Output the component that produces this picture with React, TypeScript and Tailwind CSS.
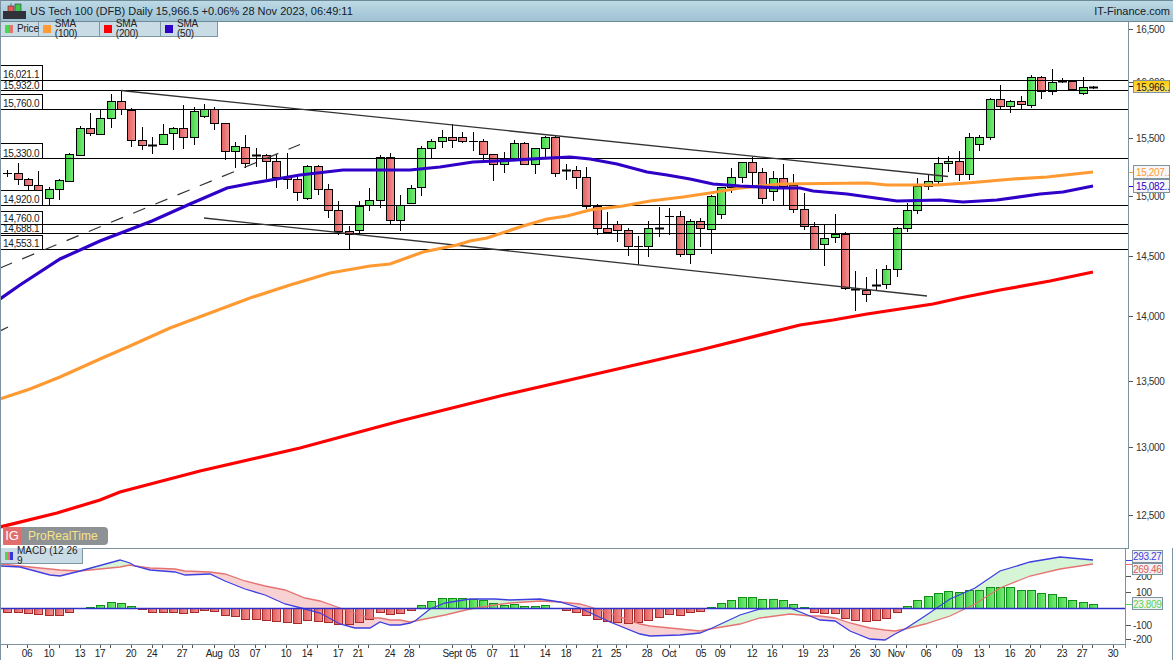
const RED = '#e57373'

// top, bottom, high, low, kind (g green, r red, d thick doji, t thin doji)
type Candle = [number, number, number, number, string]

const candles: Candle[] = [
  [172, 172, 169, 176, 't'], [172, 178, 162, 184, 'r'], [178, 184, 177, 190, 'r'], [184, 190, 170, 190, 'r'],
  [188, 197, 186, 204, 'g'], [179, 188, 178, 199, 'g'], [153, 180, 152, 181, 'g'], [127, 154, 125, 155, 'g'],
  [127, 132, 112, 135, 'r'], [117, 133, 109, 133, 'g'], [100, 117, 93, 127, 'g'], [100, 108, 89, 114, 'r'],
  [109, 139, 107, 146, 'r'], [139, 144, 126, 149, 'r'], [144, 144, 136, 153, 'd'], [133, 143, 123, 144, 'g'],
  [127, 132, 126, 149, 'g'], [127, 136, 104, 148, 'r'], [110, 136, 106, 144, 'g'], [108, 115, 103, 117, 'g'],
  [108, 122, 106, 129, 'r'], [122, 150, 122, 159, 'r'], [145, 150, 141, 167, 'g'], [146, 162, 134, 167, 'r'],
  [154, 154, 147, 166, 'd'], [154, 160, 153, 178, 'r'], [160, 176, 153, 187, 'r'], [176, 178, 152, 188, 'r'],
  [178, 191, 174, 200, 'r'], [165, 197, 164, 199, 'g'], [165, 188, 164, 194, 'r'], [188, 209, 183, 217, 'r'],
  [209, 230, 200, 234, 'r'], [230, 233, 225, 248, 'r'], [205, 229, 200, 234, 'g'], [199, 204, 187, 210, 'g'],
  [156, 199, 154, 207, 'g'], [156, 219, 152, 223, 'r'], [204, 219, 194, 230, 'g'], [187, 202, 184, 202, 'g'],
  [147, 186, 145, 195, 'g'], [140, 147, 138, 157, 'g'], [136, 140, 129, 147, 'g'], [136, 139, 123, 147, 'r'],
  [136, 140, 131, 142, 'r'], [140, 140, 131, 150, 't'], [140, 153, 138, 162, 'r'], [153, 163, 153, 180, 'r'],
  [158, 163, 151, 172, 'g'], [142, 158, 139, 159, 'g'], [142, 163, 141, 164, 'r'], [147, 163, 147, 173, 'g'],
  [136, 147, 135, 157, 'g'], [136, 172, 134, 176, 'r'], [169, 169, 163, 179, 'd'], [169, 176, 165, 188, 'r'],
  [176, 205, 166, 208, 'r'], [205, 227, 203, 234, 'r'], [227, 231, 211, 232, 'r'], [223, 229, 220, 241, 'r'],
  [229, 245, 227, 255, 'r'], [245, 245, 235, 264, 't'], [227, 245, 220, 256, 'g'], [227, 227, 206, 236, 'd'],
  [215, 215, 207, 234, 't'], [215, 253, 210, 256, 'r'], [220, 253, 218, 263, 'g'], [220, 227, 217, 246, 'r'],
  [195, 228, 194, 253, 'g'], [186, 213, 186, 218, 'g'], [176, 186, 167, 192, 'g'], [161, 176, 161, 182, 'g'],
  [161, 171, 156, 186, 'r'], [171, 197, 167, 203, 'r'], [177, 190, 170, 200, 'g'], [177, 185, 163, 204, 'r'],
  [184, 208, 173, 212, 'r'], [208, 225, 192, 229, 'r'], [225, 248, 221, 249, 'r'], [237, 243, 224, 265, 'g'],
  [233, 236, 213, 242, 'g'], [233, 287, 231, 289, 'r'], [288, 288, 270, 310, 'd'], [289, 293, 276, 301, 'r'],
  [284, 284, 268, 289, 'd'], [268, 283, 264, 288, 'g'], [227, 268, 226, 276, 'g'], [209, 227, 202, 231, 'g'],
  [185, 209, 177, 213, 'g'], [180, 185, 174, 189, 'g'], [162, 180, 156, 184, 'g'], [160, 162, 155, 171, 'g'],
  [160, 173, 150, 180, 'r'], [136, 173, 132, 179, 'g'], [136, 143, 134, 150, 'g'], [98, 136, 97, 139, 'g'],
  [98, 105, 84, 108, 'r'], [100, 105, 99, 112, 'g'], [100, 103, 95, 108, 'r'], [76, 104, 74, 107, 'g'],
  [76, 90, 75, 98, 'r'], [81, 90, 68, 94, 'g'], [80, 80, 77, 82, 'd'], [80, 88, 79, 89, 'r'],
  [86, 92, 76, 94, 'g'], [86, 86, 85, 88, 'd'],
]

const histogram = [
  -4, -4, -5, -6, -7, -7, -4, 0, 1, 3, 6, 5, 2, -1, -4, -4, -4, -5, -4, -2, -3, -7, -8, -11, -11, -12, -13, -14, -15, -12,
  -13, -14, -16, -16, -14, -11, -4, -6, -5, -2, 3, 7, 10, 10, 10, 9, 8, 5, 3, 4, 2, 2, 3, 0, -2, -4, -7, -11, -13, -14,
  -15, -14, -12, -9, -6, -7, -4, -3, 1, 5, 8, 11, 11, 9, 9, 8, 4, 1, -4, -5, -5, -10, -12, -13, -12, -10, -4, 2, 8, 12,
  15, 17, 16, 18, 18, 21, 21, 21, 18, 18, 15, 14, 11, 8, 6, 4,
]

const candleX = (i: number) => Math.round(7.4 + i * 10.34)

const levels = [
  { y: 79, label: '16,021.1', box: 64, h: 15 },
  { y: 89, label: '15,932.0', box: 79, h: 10 },
  { y: 108, label: '15,760.0', box: 93, h: 15 },
  { y: 157, label: '15,330.0', box: 142, h: 15 },
  { y: 204, label: '14,920.0', box: 189, h: 15 },
  { y: 223, label: '14,760.0', box: 210, h: 13 },
  { y: 232, label: '14,688.1', box: 223, h: 9 },
  { y: 248, label: '14,553.1', box: 234, h: 14 },
]

const priceTicks = [
  ['16,500', 28], ['16,000', 81], ['15,500', 137], ['15,000', 195], ['14,500', 255],
  ['14,000', 315], ['13,500', 380], ['13,000', 446], ['12,500', 514],
] as const

const sma50 = '0,298 20,284 60,258 100,240 152,220 190,203 227,187 253,182 300,174 343,169 390,169 410,169 440,166 473,161 507,159.5 540,157.5 570,156 590,158 617,163 647,171 667,174 690,178 713,183 740,185 780,187 800,187 813,190 847,193 897,200 940,199 963,201 997,199 1040,193 1063,191 1093,185'
const sma100 = '0,398 30,388 60,376 100,358 130,345 170,327 210,312 250,297 290,284 330,272 370,265 390,263 423,251 457,244 470,240 487,237 523,225 547,218 567,215 590,209 623,205 650,200 683,196 710,192 740,187 780,183 867,182 887,184 937,184 967,182 1013,178 1047,176 1093,171'
const sma200 = '0,526 57,512 100,499 120,491 200,470 300,447 400,420 500,395 600,372 700,349 800,324 833,319 867,313 900,308 933,303 960,297 1000,289 1050,280 1093,271'

// x, macd, signal (screen y)
const macd: [number, number, number][] = [
  [1, 565, 563], [20, 566, 565], [50, 574, 568], [60, 575, 569], [80, 570, 570], [120, 559, 566], [130, 562, 564],
  [135, 565, 565], [150, 569, 567], [175, 571, 568], [185, 574, 570], [210, 573, 571], [225, 580, 573], [245, 588, 580],
  [265, 594, 585], [285, 603, 589], [305, 608, 597], [320, 612, 600], [340, 623, 607], [355, 627, 612], [370, 627, 617],
  [380, 621, 617], [390, 624, 619], [400, 624, 619], [410, 622, 621], [415, 620, 620], [430, 608, 617], [445, 602, 614],
  [470, 598, 608], [495, 598, 604], [510, 599, 602], [540, 598, 600], [560, 601, 601], [580, 607, 603], [610, 621, 612],
  [640, 633, 623], [650, 635, 625], [680, 634, 628], [700, 632, 630], [710, 628, 628], [740, 614, 623], [760, 608, 617],
  [790, 607, 613], [810, 615, 615], [820, 619, 615], [835, 620, 617], [850, 630, 622], [870, 638, 627], [885, 639, 629],
  [895, 633, 630], [905, 628, 628], [925, 615, 623], [950, 598, 615], [975, 587, 603], [1000, 570, 587], [1030, 561, 575],
  [1060, 556, 568], [1093, 559, 563],
]

const dates: [string, number][] = [
  ['06', 27], ['10', 49], ['13', 80], ['17', 100], ['20', 131], ['24', 152], ['27', 182], ['Aug', 214], ['03', 234],
  ['07', 255], ['10', 286], ['14', 307], ['17', 338], ['21', 358], ['24', 390], ['28', 409], ['Sept', 452], ['05', 471],
  ['07', 492], ['11', 514], ['14', 545], ['18', 566], ['21', 597], ['25', 616], ['28', 647], ['Oct', 669], ['05', 701],
  ['09', 720], ['12', 752], ['16', 772], ['19', 803], ['23', 823], ['26', 855], ['30', 875], ['Nov', 896], ['06', 926],
  ['09', 957], ['13', 979], ['16', 1010], ['20', 1030], ['23', 1062], ['27', 1082], ['30', 1113],
]

function Gradients() {
  return (
    <defs>
      <linearGradient id="upFill" x1="0" x2="1" y1="0" y2="0">
        <stop offset="0" stopColor="#3fd643" />
        <stop offset="1" stopColor="#7dea7d" />
      </linearGradient>
      <linearGradient id="downFill" x1="0" x2="1" y1="0" y2="0">
        <stop offset="0" stopColor="#e25f5f" />
        <stop offset="1" stopColor="#f39393" />
      </linearGradient>
      <linearGradient id="lastFill" x1="0" x2="0" y1="0" y2="1">
        <stop offset="0" stopColor="#ffc800" />
        <stop offset="1" stopColor="#ffe27a" />
      </linearGradient>
    </defs>
  )
}

function PriceChart() {
  return (
    <svg viewBox="0 21 1173 526" className="block h-[526px] w-[1173px]">
      <Gradients />
      {candles.map(([top, bottom, hi, lo, kind], i) => {
        const x = candleX(i)
        return (
          <g key={i}>
            <line x1={x + 0.5} x2={x + 0.5} y1={hi} y2={lo} stroke="#000" />
            {kind === 'g' || kind === 'r' ? (
              <rect
                x={x - 3.5}
                y={top + 0.5}
                width={8}
                height={bottom - top}
                fill={kind === 'g' ? 'url(#upFill)' : 'url(#downFill)'}
                stroke="#000"
              />
            ) : (
              <line
                x1={x - 4}
                x2={x + 5}
                y1={top + 0.5}
                y2={top + 0.5}
                stroke="#000"
                strokeWidth={kind === 'd' ? 2 : 1}
              />
            )}
          </g>
        )
      })}

      {levels.map(l => (
        <line key={l.y} x1={1} x2={1128} y1={l.y + 0.5} y2={l.y + 0.5} stroke="#000" />
      ))}

      <line x1={121} y1={89.5} x2={948} y2={175.5} stroke="#333" strokeWidth={1.3} />
      <line x1={204} y1={217} x2={927} y2={295} stroke="#333" strokeWidth={1.3} />
      <line x1={0} y1={267} x2={300} y2={143.5} stroke="#333" strokeWidth={1.2} strokeDasharray="13 11" />
      <line x1={0} y1={330} x2={8} y2={326} stroke="#333" strokeWidth={1.2} />

      <polyline points={sma200} fill="none" stroke="#ff0000" strokeWidth={3.2} />
      <polyline points={sma100} fill="none" stroke="#ff9a33" strokeWidth={3.2} />
      <polyline points={sma50} fill="none" stroke="#2f00c8" strokeWidth={3.2} />

      {levels.map(l => (
        <g key={l.label}>
          <rect x={0.5} y={l.box + 0.5} width={42} height={l.h} fill="#fff" stroke="#000" />
        </g>
      ))}
      {levels.map(l => (
        <line key={l.y} x1={0} x2={43} y1={l.y + 0.5} y2={l.y + 0.5} stroke="#000" />
      ))}
      {[
        ['16,021.1', 77], ['15,932.0', 87.5], ['15,760.0', 106], ['15,330.0', 155.5], ['14,920.0', 202],
        ['14,760.0', 220.5], ['14,688.1', 230.5], ['14,553.1', 245.5],
      ].map(([label, y]) => (
        <text key={label} x={3} y={y} fontSize={10} letterSpacing={-0.35} fill="#1a1a1a">
          {label}
        </text>
      ))}

      <line x1={1128.5} x2={1128.5} y1={21} y2={547} stroke="#7d939f" />
      {priceTicks.map(([label, y]) => (
        <g key={label}>
          <line x1={1129} x2={1133} y1={y + 0.5} y2={y + 0.5} stroke="#555" />
          <text x={1136} y={y + 4} fontSize={10} letterSpacing={-0.35} fill="#333">
            {label}
          </text>
        </g>
      ))}

      <line x1={1129} x2={1133} y1={85.5} y2={85.5} stroke="#000" />
      <rect x={1133.5} y={79.5} width={36} height={12} fill="url(#lastFill)" stroke="#7d939f" />
      <text x={1136} y={89.5} fontSize={10} letterSpacing={-0.35} fill="#1a1a1a">15,966..</text>

      <line x1={1129} x2={1133} y1={171.5} y2={171.5} stroke="#ff9a33" />
      <rect x={1133.5} y={164.5} width={36} height={13} fill="#f7f7f7" stroke="#7d939f" />
      <text x={1136} y={175} fontSize={10} letterSpacing={-0.35} fill="#ff9a33">15,207..</text>

      <line x1={1129} x2={1133} y1={185.5} y2={185.5} stroke="#2f00c8" />
      <rect x={1133.5} y={178.5} width={36} height={13} fill="#f7f7f7" stroke="#7d939f" />
      <text x={1136} y={189} fontSize={10} letterSpacing={-0.35} fill="#2f00c8">15,082..</text>
    </svg>
  )
}

function MacdChart() {
  const path = (idx: 1 | 2) => macd.map(p => `${p[0]},${p[idx]}`).join(' ')
  const ticks: number[] = [7]
  dates.forEach(([, x], i) => {
    ticks.push(x)
    const next = dates[i + 1]
    if (next && next[1] - x >= 30) ticks.push(x + 10)
  })

  return (
    <svg viewBox="0 547 1173 113" className="block h-[113px] w-[1173px]">
      <Gradients />
      {macd.slice(1).map((p, i) => {
        const q = macd[i]
        const up = p[1] + q[1] < p[2] + q[2]
        return (
          <polygon
            key={p[0]}
            points={`${q[0]},${q[1]} ${p[0]},${p[1]} ${p[0]},${p[2]} ${q[0]},${q[2]}`}
            fill={up ? '#d6f5d6' : '#f8d2d2'}
          />
        )
      })}
      {histogram.map((v, i) => {
        if (v === 0) return null
        const x = candleX(i)
        const h = Math.abs(v)
        return (
          <rect
            key={i}
            x={x - 3.5}
            y={v > 0 ? 607.5 - h : 607.5}
            width={8}
            height={h}
            fill={v > 0 ? 'url(#upFill)' : 'url(#downFill)'}
            stroke={v > 0 ? '#0f8f17' : '#a52a2a'}
          />
        )
      })}
      <polyline points={path(2)} fill="none" stroke={RED} strokeWidth={1.3} />
      <polyline points={path(1)} fill="none" stroke="#3f3fe0" strokeWidth={1.3} />
      <line x1={1} x2={1125} y1={607.5} y2={607.5} stroke="#3030c8" strokeWidth={1.3} />

      <line x1={0} x2={1129} y1={547.5} y2={547.5} stroke="#7d939f" />
      <line x1={1} x2={1125} y1={643.5} y2={643.5} stroke="#7d939f" />
      <line x1={1125.5} x2={1125.5} y1={547} y2={647} stroke="#7d939f" />
      <line x1={0} x2={1173} y1={659.5} y2={659.5} stroke="#7d939f" />
      <line x1={1172.5} x2={1172.5} y1={547} y2={660} stroke="#7d939f" />

      {ticks.map((x, i) => (
        <line key={i} x1={x + 0.5} x2={x + 0.5} y1={644} y2={647} stroke="#555" />
      ))}
      {dates.map(([label, x]) => (
        <text key={label + x} x={x} y={656} fontSize={10} letterSpacing={-0.35} textAnchor="middle" fill="#222">
          {label}
        </text>
      ))}

      {[['200', 575], ['100', 591], ['-100', 624], ['-200', 638]].map(([label, y]) => (
        <g key={label}>
          <line x1={1126} x2={1131} y1={Number(y) + 0.5} y2={Number(y) + 0.5} stroke="#555" />
          <text x={label.length > 3 ? 1133 : 1136} y={Number(y) + 4} fontSize={10} letterSpacing={-0.35} fill="#333">
            {label}
          </text>
        </g>
      ))}

      <line x1={1126} x2={1132} y1={559.5} y2={559.5} stroke="#3f3fe0" />
      <rect x={1132.5} y={549.5} width={30} height={12} fill="#f2f2f2" stroke="#7d939f" />
      <text x={1133} y={559} fontSize={10} letterSpacing={-0.35} fill="#3f3fe0">293.27</text>

      <line x1={1126} x2={1132} y1={563.5} y2={563.5} stroke={RED} />
      <rect x={1132.5} y={562.5} width={30} height={11} fill="#f2f2f2" stroke="#7d939f" />
      <text x={1133} y={571.5} fontSize={10} letterSpacing={-0.35} fill="#e05a5a">269.46</text>

      <line x1={1126} x2={1132} y1={603.5} y2={603.5} stroke="#55d455" />
      <rect x={1132.5} y={596.5} width={30} height={12} fill="#f2f2f2" stroke="#7d939f" />
      <text x={1133} y={606.5} fontSize={10} letterSpacing={-0.35} fill="#55d455">23.809</text>
    </svg>
  )
}

function LegendItem({ label, color, width }: { label: string; color?: string; width: string }) {
  return (
    <div className={`flex h-[15px] items-center gap-1 border-r border-b border-[#7f97a3] bg-[#c9dbe4] pl-1 ${width}`}>
      {color ? (
        <span className={`h-2 w-2 ${color}`} />
      ) : (
        <span className="flex h-2 w-2">
          <span className="w-1 bg-[#4fd64f]" />
          <span className="w-1 bg-[#e57373]" />
        </span>
      )}
      <span className="text-[10px] leading-none tracking-[-0.2px] text-[#222]">{label}</span>
    </div>
  )
}

export default function App() {
  return (
    <div className="flex h-[660px] w-[1173px] flex-col overflow-hidden border-l border-[#7d939f] bg-white font-['Liberation_Sans',Arial,sans-serif]">
      <header className="flex h-[22px] shrink-0 items-center justify-between border-y border-[#6f8a97] bg-gradient-to-b from-[#bcd9e6] to-[#9fc2d2] pr-[3px] pl-[2px] text-[11px] text-[#14202a]">
        <div className="flex items-center gap-[3px]">
          <svg width="24" height="16" viewBox="0 0 24 16">
            <rect x="5" y="3" width="6" height="6" fill="#e55b4d" stroke="#333" strokeWidth="0.6" />
            <line x1="8" x2="8" y1="0" y2="3" stroke="#333" strokeWidth="0.6" />
            <rect x="12" y="1" width="6" height="8" fill="#3fc84a" stroke="#333" strokeWidth="0.6" />
            <rect x="0" y="8" width="23" height="8" fill="#2f3238" />
          </svg>
          <span>US Tech 100 (DFB) Daily 15,966.5 +0.06% 28 Nov 2023, 06:49:11</span>
        </div>
        <span>IT-Finance.com</span>
      </header>

      <div className="relative -ml-px h-[526px] shrink-0">
        <PriceChart />
        <div className="absolute top-0 left-px flex">
          <LegendItem label="Price" width="w-[38px]" />
          <LegendItem label="SMA (100)" color="bg-[#ff9a33]" width="w-[61px]" />
          <LegendItem label="SMA (200)" color="bg-[#ff0000]" width="w-[61px]" />
          <LegendItem label="SMA (50)" color="bg-[#2f00c8]" width="w-[57px]" />
        </div>
        <div className="absolute bottom-[3px] left-[3px] flex h-[18px] w-[105px] items-center gap-[7px] rounded-r-sm bg-[#8f9294]">
          <span className="flex h-full w-[18px] items-center justify-center bg-[#e26d6d] text-[13px] text-white">IG</span>
          <span className="text-[12px] text-[#f6e486]">ProRealTime</span>
        </div>
      </div>

      <div className="relative -ml-px flex-1">
        <MacdChart />
        <div className="absolute top-0 left-px flex h-[16px] w-[82px] items-center gap-1 border-r border-b border-[#7f97a3] bg-[#c9dbe4] pl-1">
          <span className="flex h-2 w-2">
            <span className="w-[3px] bg-[#4fd64f]" />
            <span className="w-[3px] bg-[#e57373]" />
            <span className="w-[3px] bg-[#3333dd]" />
          </span>
          <span className="text-[10px] leading-none text-[#222]">MACD (12 26 9</span>
        </div>
      </div>
    </div>
  )
}
